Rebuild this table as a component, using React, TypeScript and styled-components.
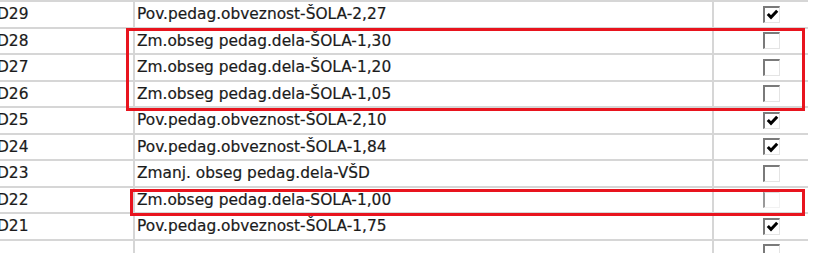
import styled, { createGlobalStyle } from 'styled-components';

type Item = { code: string; name: string; checked: boolean; dim?: boolean };

const items: Item[] = [
  { code: 'D29', name: 'Pov.pedag.obveznost-ŠOLA-2,27', checked: true },
  { code: 'D28', name: 'Zm.obseg pedag.dela-ŠOLA-1,30', checked: false },
  { code: 'D27', name: 'Zm.obseg pedag.dela-ŠOLA-1,20', checked: false },
  { code: 'D26', name: 'Zm.obseg pedag.dela-ŠOLA-1,05', checked: false },
  { code: 'D25', name: 'Pov.pedag.obveznost-ŠOLA-2,10', checked: true },
  { code: 'D24', name: 'Pov.pedag.obveznost-ŠOLA-1,84', checked: true },
  { code: 'D23', name: 'Zmanj. obseg pedag.dela-VŠD', checked: false },
  { code: 'D22', name: 'Zm.obseg pedag.dela-ŠOLA-1,00', checked: false, dim: true },
  { code: 'D21', name: 'Pov.pedag.obveznost-ŠOLA-1,75', checked: true },
  { code: '', name: '', checked: false },
];

export default function App() {
  return (
    <>
      <GlobalStyle />
      <Sheet>
        <Table>
          {items.map((item, i) => (
            <Row key={i}>
              <CodeCell>{item.code}</CodeCell>
              <NameCell>{item.name}</NameCell>
              <CheckCell>
                <CheckBox dim={item.dim}>
                  {item.checked && (
                    <svg width="13" height="13" viewBox="0 0 13 13">
                      <polyline
                        points="1.8,6 5,9.3 11.2,2.8"
                        fill="none"
                        stroke="#000"
                        strokeWidth="3"
                      />
                    </svg>
                  )}
                </CheckBox>
              </CheckCell>
            </Row>
          ))}
        </Table>
        <Highlight top={28} left={126} width={679} height={83} />
        <Highlight top={189} left={130} width={675} height={27} />
      </Sheet>
    </>
  );
}

const GlobalStyle = createGlobalStyle`
  html, body {
    margin: 0;
    padding: 0;
    background: #fff;
  }
  body {
    font-family: "DejaVu Sans", Verdana, sans-serif;
    color: #1b1b1b;
    overflow: hidden;
  }
`;

const Sheet = styled.div`
  position: relative;
  width: 816px;
  height: 253px;
  overflow: hidden;
`;

const Table = styled.div`
  display: flex;
  flex-direction: column;
  width: 808px;
`;

const Row = styled.div`
  display: grid;
  grid-template-columns: 133px 579px 96px;
  height: 26.5px;
  box-sizing: border-box;
  border-top: 2px solid #d6d6d6;
  flex-shrink: 0;
`;

const Cell = styled.div`
  display: flex;
  align-items: center;
  font-size: 15.4px;
  white-space: nowrap;
  overflow: hidden;
  -webkit-text-stroke: 0.2px #1b1b1b;
`;

const CodeCell = styled(Cell)`
  text-indent: -3px;
`;

const NameCell = styled(Cell)`
  border-left: 2px solid #d6d6d6;
  padding-left: 2px;
`;

const CheckCell = styled(Cell)`
  border-left: 2px solid #d6d6d6;
  padding-left: 49px;
`;

const CheckBox = styled.div<{ dim?: boolean }>`
  box-sizing: border-box;
  width: 17px;
  height: 17px;
  background: #fff;
  border-style: solid;
  border-width: 2px 1px 1px 2px;
  border-color: ${(p) => (p.dim ? '#e0e0e0 #f2f2f2 #f2f2f2 #9a9a9a' : '#7a7a7a #e4e4e4 #e4e4e4 #7a7a7a')};
  display: flex;
  align-items: center;
  justify-content: center;
`;

const Highlight = styled.div<{ top: number; left: number; width: number; height: number }>`
  position: absolute;
  top: ${(p) => p.top}px;
  left: ${(p) => p.left}px;
  width: ${(p) => p.width}px;
  height: ${(p) => p.height}px;
  box-sizing: border-box;
  border: 3px solid #e8141e;
  pointer-events: none;
`;
